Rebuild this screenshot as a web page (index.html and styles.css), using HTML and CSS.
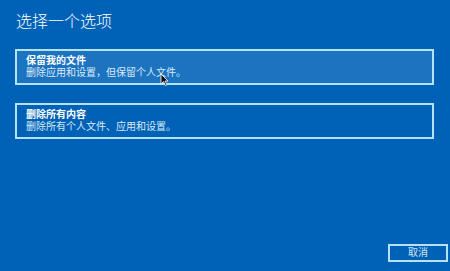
FILE: index.html
```html
<!DOCTYPE html>
<html lang="zh-CN">
<head>
    <meta charset="UTF-8">
    <title>选择一个选项</title>
    <link rel="stylesheet" href="styles.css">
</head>
<body>
    <div class="screen">
        <h1 class="title">选择一个选项</h1>

        <div class="option active">
            <div class="option-name">保留我的文件</div>
            <div class="option-desc">删除应用和设置，但保留个人文件。</div>
            <svg class="cursor" width="9" height="13" viewBox="0 0 9 13">
                <path d="M1 1 L1 11 L3.5 8.5 L5.5 12.5 L7 11.8 L5 8 L8 8 Z" fill="#111" stroke="#fff" stroke-width="0.8"/>
            </svg>
        </div>

        <div class="option">
            <div class="option-name">删除所有内容</div>
            <div class="option-desc">删除所有个人文件、应用和设置。</div>
        </div>

        <div class="footer">
            <button class="btn">取消</button>
        </div>
    </div>
</body>
</html>
```

FILE: styles.css
```css
html, body {
    margin: 0;
    height: 100%;
}
body {
    background: #0062b6;
    color: #ffffff;
    font-family: "Noto Sans CJK SC", "Noto Sans", sans-serif;
}
.screen {
    height: 100%;
    box-sizing: border-box;
    padding: 10px 16px 9px 15px;
    display: flex;
    flex-direction: column;
}
.title {
    margin: 0 0 0 1px;
    font-size: 16px;
    font-weight: 300;
    line-height: 21px;
    height: 39px;
}
.option {
    position: relative;
    box-sizing: border-box;
    height: 36px;
    border: 2px solid #b4e2f8;
    padding: 4px 9px 3px;
    margin-bottom: 18px;
    font-family: "Liberation Sans", "Noto Sans CJK SC", sans-serif;
    font-size: 10px;
    line-height: 12px;
}
.option.active {
    background: #1c73c0;
}
.option-name {
    font-weight: bold;
}
.option-desc {
    color: #dbeaf7;
}
.cursor {
    position: absolute;
    left: 143px;
    top: 22px;
}
.footer {
    margin-top: auto;
    margin-right: -14px;
    display: flex;
    justify-content: flex-end;
}
.btn {
    width: 60px;
    height: 18px;
    box-sizing: border-box;
    background: transparent;
    border: 2px solid #b4e2f8;
    color: #d6e4f2;
    font-family: "Liberation Sans", "Noto Sans CJK SC", sans-serif;
    font-size: 10px;
    line-height: 12px;
    padding: 0;
}
```
